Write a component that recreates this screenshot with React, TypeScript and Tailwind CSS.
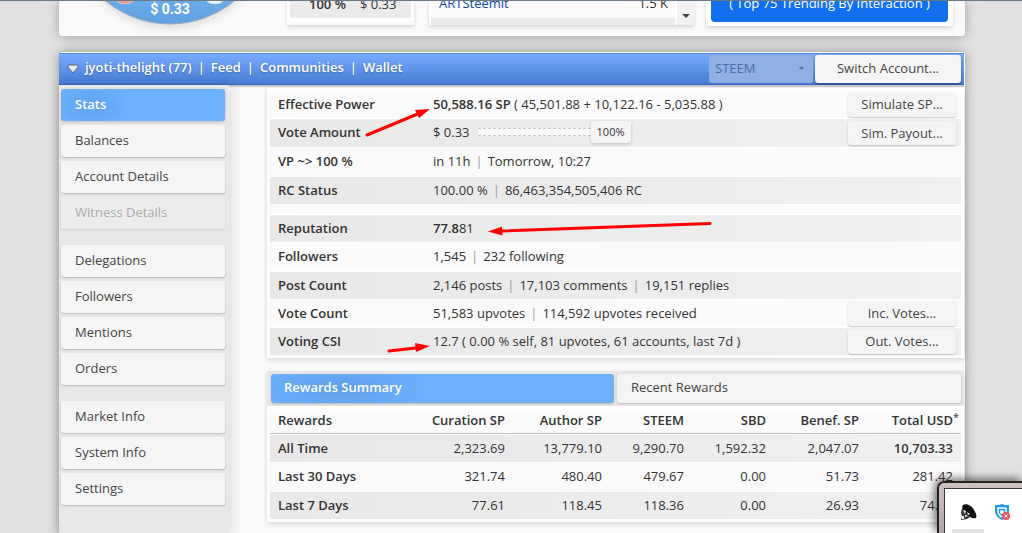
import { ReactNode, useState } from "react";
import clsx from "clsx";

type StatRow = {
	label: string;
	value: ReactNode;
	action?: string;
	tall?: boolean;
	striped?: boolean;
};

const menuGroups = [
	["Stats", "Balances", "Account Details", "Witness Details"],
	["Delegations", "Followers", "Mentions", "Orders"],
	["Market Info", "System Info", "Settings"],
];

const rewardColumns = [
	"Curation SP",
	"Author SP",
	"STEEM",
	"SBD",
	"Benef. SP",
	"Total USD",
];

const rewardRows = [
	{
		label: "All Time",
		values: ["2,323.69", "13,779.10", "9,290.70", "1,592.32", "2,047.07", "10,703.33"],
	},
	{
		label: "Last 30 Days",
		values: ["321.74", "480.40", "479.67", "0.00", "51.73", "281.42"],
	},
	{
		label: "Last 7 Days",
		values: ["77.61", "118.45", "118.36", "0.00", "26.93", "74.18"],
	},
];

const Sep = () => <span className="mx-[5px] text-[#999]">|</span>;

const VoteSlider = () => {
	const [weight, setWeight] = useState(100);
	return (
		<label className="relative flex h-[22px] items-center">
			<span className="h-2 w-[113px] border-y border-dashed border-[#ccc] bg-[#f8f8f8]" />
			<span className="flex h-[22px] w-10 items-center justify-center rounded-[3px] bg-[#f6f6f6] text-[11px] shadow-[0_1px_3px_rgba(0,0,0,0.2)]">
				{weight}%
			</span>
			<input
				type="range"
				min={1}
				max={100}
				value={weight}
				aria-label="Vote weight"
				onChange={(e) => setWeight(Number(e.target.value))}
				className="absolute inset-0 w-full cursor-pointer opacity-0"
			/>
		</label>
	);
};

const accountRows: StatRow[] = [
	{
		label: "Effective Power",
		value: (
			<>
				<span className="font-semibold">50,588.16 SP</span> ( 45,501.88 +
				10,122.16 - 5,035.88 )
			</>
		),
		action: "Simulate SP...",
	},
	{
		label: "Vote Amount",
		value: (
			<div className="flex items-center gap-2">
				$ 0.33
				<VoteSlider />
			</div>
		),
		action: "Sim. Payout...",
		tall: true,
		striped: true,
	},
	{
		label: "VP ~> 100 %",
		value: (
			<>
				in 11h
				<Sep />
				Tomorrow, 10:27
			</>
		),
		tall: true,
	},
	{
		label: "RC Status",
		value: (
			<>
				100.00 %<Sep />
				86,463,354,505,406 RC
			</>
		),
		striped: true,
	},
];

const socialRows: StatRow[] = [
	{
		label: "Reputation",
		value: (
			<>
				<span className="font-semibold">77.8</span>81
			</>
		),
		striped: true,
	},
	{
		label: "Followers",
		value: (
			<>
				1,545
				<Sep />
				232 following
			</>
		),
		tall: true,
	},
	{
		label: "Post Count",
		value: (
			<>
				2,146 posts
				<Sep />
				17,103 comments
				<Sep />
				19,151 replies
			</>
		),
		striped: true,
	},
	{
		label: "Vote Count",
		value: (
			<>
				51,583 upvotes
				<Sep />
				114,592 upvotes received
			</>
		),
		action: "Inc. Votes...",
	},
	{
		label: "Voting CSI",
		value: "12.7 ( 0.00 % self, 81 upvotes, 61 accounts, last 7d )",
		action: "Out. Votes...",
		striped: true,
	},
];

const StatRows = ({ rows }: { rows: StatRow[] }) => (
	<tbody>
		{rows.map((row) => (
			<tr
				key={row.label}
				className={clsx(
					row.tall ? "h-7" : "h-[27px]",
					row.striped
						? "bg-linear-to-r from-[#e8e8e8] to-[#f0f0f0]"
						: "bg-[#fafafa]"
				)}>
				<th
					scope="row"
					className="w-[163px] p-0 pb-[2px] pl-2 text-left font-semibold">
					{row.label}
				</th>
				<td className="p-0 pb-[2px]">{row.value}</td>
				<td className="w-[113px] p-0">
					{row.action && (
						<button className="block h-6 w-[108px] rounded-[3px] bg-[#f4f4f4] pb-px text-[#444] shadow-[0_1px_2px_rgba(0,0,0,0.2)]">
							{row.action}
						</button>
					)}
				</td>
			</tr>
		))}
	</tbody>
);

const TopCard = () => (
	<header className="flex h-9 shrink-0 overflow-hidden rounded-b-[4px] bg-[#fafafa]">
		<div className="relative w-[228px] shrink-0">
			<svg
				className="absolute top-0 left-0"
				width="228"
				height="36"
				viewBox="0 0 228 36">
				<defs>
					<linearGradient id="gauge" x1="0" y1="0" x2="0" y2="1">
						<stop offset="0.85" stopColor="#6fb0ec" />
						<stop offset="1" stopColor="#5c9edf" />
					</linearGradient>
					<filter id="soft" x="-10%" y="-10%" width="120%" height="130%">
						<feGaussianBlur stdDeviation="4" />
					</filter>
				</defs>
				<circle cx="111" cy="-72" r="100" fill="#c8c8c8" opacity="0.6" filter="url(#soft)" />
				<circle cx="111" cy="-77" r="101" fill="url(#gauge)" stroke="#a5a5bd" strokeWidth="1" />
				<circle cx="66" cy="-9" r="13" fill="#ee9a94" stroke="#d9c6cc" />
				<circle cx="156" cy="-9" r="13" fill="#f4f8ff" stroke="#cfdcf0" />
			</svg>
			<span className="relative block w-[222px] text-center font-[Roboto,sans-serif] text-sm leading-[18px] font-bold text-white">
				$ 0.33
			</span>
		</div>
		<div className="flex h-[25px] w-[127px] shrink-0 flex-col justify-end bg-[#fbfbfb] shadow-[0_2px_4px_rgba(0,0,0,0.15)]">
			<div className="mb-1 flex-1 rounded-b-[3px] bg-white px-[3px] pb-[3px]">
				<div className="flex h-[18px] items-end gap-[14px] bg-[#eaeaea] pb-[5px] pl-[19px]">
					<span className="font-semibold">100 %</span>
					<span>$ 0.33</span>
				</div>
			</div>
		</div>
		<div className="ml-[15px] flex h-[25px] flex-1 bg-white pl-[2px] shadow-[0_2px_4px_rgba(0,0,0,0.15)]">
			<div className="flex-1">
				<div className="flex h-[18px] items-end justify-between bg-[#fafafa] pr-[7px] pb-[6px] pl-2">
					<a href="#artsteemit" className="text-[#1247a5]">
						ARTSteemit
					</a>
					<span>1.5 K</span>
				</div>
				<div className="h-[7px] bg-[#ebebeb]" />
			</div>
			<div className="ml-[2px] flex w-[17px] items-end justify-center bg-[#f2f2f2] pb-[7px]">
				<svg width="8" height="4" viewBox="0 0 8 4">
					<path d="M0 0h8L4 4z" fill="#444" />
				</svg>
			</div>
		</div>
		<div className="mr-3 ml-3 h-[26px] w-[247px] shrink-0 rounded-b-[3px] bg-white px-[5px] shadow-[0_2px_4px_rgba(0,0,0,0.15)]">
			<button className="flex h-[22px] w-full items-end justify-center rounded-b-[4px] bg-[#1170f0] pb-[10px] text-white">
				( Top 75 Trending By Interaction )
			</button>
		</div>
	</header>
);

const AccountBar = () => (
	<div className="flex h-8 items-center border-t border-b border-t-[#4f87dc] border-b-[#3564c0] bg-linear-to-b from-[#79abff] to-[#467cd4] pr-[3px] pl-2">
		<button aria-label="Toggle account" className="mr-[6px]">
			<svg width="12" height="10" viewBox="0 0 12 10" className="block">
				<path d="M1 1h10v2L6 9 1 3z" fill="#e9e9e9" stroke="#656b78" />
			</svg>
		</button>
		<nav className="flex flex-1 items-center gap-[6px] pb-1 font-semibold text-white [text-shadow:0_1px_2px_rgba(0,0,0,0.3)]">
			<a href="#account">jyoti-thelight (77)</a>
			<span>|</span>
			<a href="#feed">Feed</a>
			<span>|</span>
			<a href="#communities">Communities</a>
			<span>|</span>
			<a href="#wallet">Wallet</a>
		</nav>
		<div className="relative mr-[2px]">
			<select
				aria-label="Chain"
				disabled
				className="block h-7 w-[104px] appearance-none rounded-[3px] bg-[#8fb0e4] pb-[3px] pl-[6px] text-[#4a6da8]">
				<option>STEEM</option>
			</select>
			<svg
				className="absolute top-3 right-[9px]"
				width="5"
				height="3"
				viewBox="0 0 5 3">
				<path d="M0 0h5L2.500 3z" fill="#4a6da8" />
			</svg>
		</div>
		<button className="h-7 w-[146px] rounded-[3px] bg-[#f5f5f5] pb-[2px] text-[#444] shadow-[0_1px_2px_rgba(0,0,0,0.4)]">
			Switch Account...
		</button>
	</div>
);

const Sidebar = () => (
	<aside className="flex w-[170px] shrink-0 flex-col gap-4 bg-[#e8e8e8] px-[2px] pt-1 shadow-[2px_0_12px_rgba(0,0,0,0.14)]">
		{menuGroups.map((group) => (
			<div key={group[0]} className="flex flex-col gap-1">
				{group.map((item) => (
					<button
						key={item}
						disabled={item === "Witness Details"}
						className={clsx(
							"h-8 w-[164px] rounded-[3px] pb-[2px] pl-[14px] text-left",
							item === "Stats"
								? "bg-[#6cb2ff] bg-radial-[40px_24px_at_30px_16px] from-[#60a3ee] to-[#6cb2ff] font-semibold text-white shadow-[0_1px_3px_rgba(0,0,0,0.2)]"
								: item === "Witness Details"
								? "bg-[#ececec] text-[#aaa] shadow-[0_1px_2px_rgba(0,0,0,0.1)]"
								: "bg-[#f5f5f5] text-[#444] shadow-[0_1px_2px_rgba(0,0,0,0.22)]"
						)}>
						{item}
					</button>
				))}
			</div>
		))}
	</aside>
);

const Rewards = () => (
	<section className="mt-[13px] bg-white shadow-[0_2px_5px_rgba(0,0,0,0.14)]">
		<div className="flex gap-[3px] bg-[#e6e6e6] py-[3px] pr-[3px] pl-1">
			<button className="h-[29px] flex-1 rounded-[3px] bg-[#6cb2ff] bg-radial-[90px_30px_at_70px_14px] from-[#5f9fe8] to-[#6cb2ff] pb-1 pl-[13px] text-left font-semibold text-white shadow-[0_1px_2px_rgba(0,0,0,0.2)]">
				Rewards Summary
			</button>
			<button className="h-[29px] flex-1 rounded-[3px] bg-[#f4f4f4] pb-1 pl-[14px] text-left text-[#444] shadow-[0_1px_2px_rgba(0,0,0,0.2)]">
				Recent Rewards
			</button>
		</div>
		<div className="px-[3px] pt-[2px] pb-[2px]">
			<table className="w-full table-fixed border-separate border-spacing-x-0 border-spacing-y-px">
				<colgroup>
					<col />
					<col className="w-[97px]" />
					<col className="w-[97px]" />
					<col className="w-[82px]" />
					<col className="w-[82px]" />
					<col className="w-[93px]" />
					<col className="w-[94px]" />
				</colgroup>
				<thead>
					<tr className="h-[25px] bg-[#fafafa]">
						<th className="border-b border-[#bbb] p-0 pb-[2px] pl-2 text-left font-semibold">
							Rewards
						</th>
						{rewardColumns.map((col) => (
							<th
								key={col}
								className="relative border-b border-[#bbb] p-0 pr-2 pb-[2px] text-right font-semibold">
								{col}
								{col === "Total USD" && (
									<span className="absolute top-0 right-[2px] text-[11px] leading-4 font-normal">
										*
									</span>
								)}
							</th>
						))}
					</tr>
				</thead>
				<tbody>
					{rewardRows.map((row, i) => (
						<tr
							key={row.label}
							className={clsx(
								i % 2 === 0
									? "h-[27px] bg-linear-to-r from-[#e8e8e8] to-[#f0f0f0]"
									: "h-7 bg-[#fafafa]"
							)}>
							<th
								scope="row"
								className="p-0 pb-[2px] pl-2 text-left font-semibold">
								{row.label}
							</th>
							{row.values.map((value, j) => (
								<td
									key={j}
									className={clsx(
										"p-0 pr-2 pb-[2px] text-right",
										i === 0 && j === 5 && "font-semibold"
									)}>
									{value}
								</td>
							))}
						</tr>
					))}
				</tbody>
			</table>
		</div>
	</section>
);

// red marker arrows drawn over the page
const Arrows = () => (
	<svg
		className="pointer-events-none absolute top-0 left-0"
		width="1022"
		height="533"
		viewBox="0 0 1022 533"
		fill="#f00"
		stroke="#f00"
		strokeWidth="3"
		strokeLinecap="round">
		<path d="M367 135L420 113" />
		<path d="M430 109l-11 9-4-8z" strokeWidth="0" />
		<path d="M710 223.500L500 231" />
		<path d="M488 231.500l14-5 .5 9z" strokeWidth="0" />
		<path d="M389 351L420 347.500" />
		<path d="M430 346l-14 6-1-9z" strokeWidth="0" />
	</svg>
);

const TrayPopup = () => (
	<div className="absolute right-0 bottom-0 h-[52px] w-[85px] rounded-tl-[7px] border-t-2 border-l-2 border-[#222] bg-linear-to-b from-[#d0c2c2] to-[#b5a5a5] pt-[5px] pl-[5px] shadow-[-2px_-2px_8px_rgba(0,0,0,0.6)]">
		<div className="flex h-full flex-col justify-between border-t border-l border-[#40363a] bg-white pt-[14px] pl-[15px]">
			<div className="flex gap-4">
				<svg width="18" height="18" viewBox="0 0 18 18">
					<path d="M3 2c4-2 9 1 11 5 2 3 3 6 2 8-3 1-7-1-10-4S1 4 3 2z" fill="#111" />
					<path d="M2 5l4 6 4 3-3 2-6 1 1-4-1-3z" fill="#333" />
					<path d="M3 7l3 1-1 3zM5 12l3 1-3 1zM2 13h2v3H2zM7 9l3 2-2 1z" fill="#fff" />
				</svg>
				<svg width="18" height="18" viewBox="0 0 18 18">
					<path d="M1 2c3 0 5 0 7-1 2 1 4 1 7 1v6c0 4-3 7-7 9-4-2-7-5-7-9z" fill="#1e9bf0" />
					<path d="M3 5h9M4 5v3c0 3 2 5 4 6M12 5v4" fill="none" stroke="#fff" strokeWidth="1.500" />
					<circle cx="8" cy="9" r="2" fill="#fff" />
					<circle cx="12" cy="13" r="4" fill="#f0525f" />
					<path d="M10.500 11.500l3 3m0-3l-3 3" stroke="#fff" />
				</svg>
			</div>
			<div className="-ml-2 h-1 w-8 bg-[#e2e2e2]" />
		</div>
	</div>
);

const App = () => {
	return (
		<div className="relative flex h-screen flex-col overflow-hidden bg-[#e1e1e1] pr-[57px] pl-[59px] font-['Open_Sans',sans-serif] text-[13px] leading-[18px] text-[#333]">
			<div className="absolute top-0 left-0 z-10 h-px w-full bg-[#6b7785]" />
			<div className="shrink-0 rounded-b-[4px] shadow-[0_1px_12px_rgba(0,0,0,0.3)]">
				<TopCard />
			</div>

			<main className="mt-4 flex flex-1 flex-col rounded-t-[4px] border-t border-r border-t-white border-r-white bg-[#fafafa] shadow-[0_0_12px_rgba(0,0,0,0.35)]">
				<AccountBar />
				<div className="flex flex-1 shadow-[inset_0_2px_1px_rgba(0,0,0,0.2)]">
					<Sidebar />
					<div className="flex-1 pt-[3px] pl-[38px]">
						<section className="bg-white px-[3px] pt-[2px] pb-[2px] shadow-[0_2px_5px_rgba(0,0,0,0.14)]">
							<table className="w-full border-separate border-spacing-x-0 border-spacing-y-px">
								<StatRows rows={accountRows} />
								<tbody>
									<tr className="h-[9px] bg-[#fafafa]">
										<td colSpan={3} className="p-0" />
									</tr>
								</tbody>
								<StatRows rows={socialRows} />
							</table>
						</section>
						<Rewards />
					</div>
				</div>
			</main>

			<Arrows />
			<TrayPopup />
		</div>
	);
};

export default App;
